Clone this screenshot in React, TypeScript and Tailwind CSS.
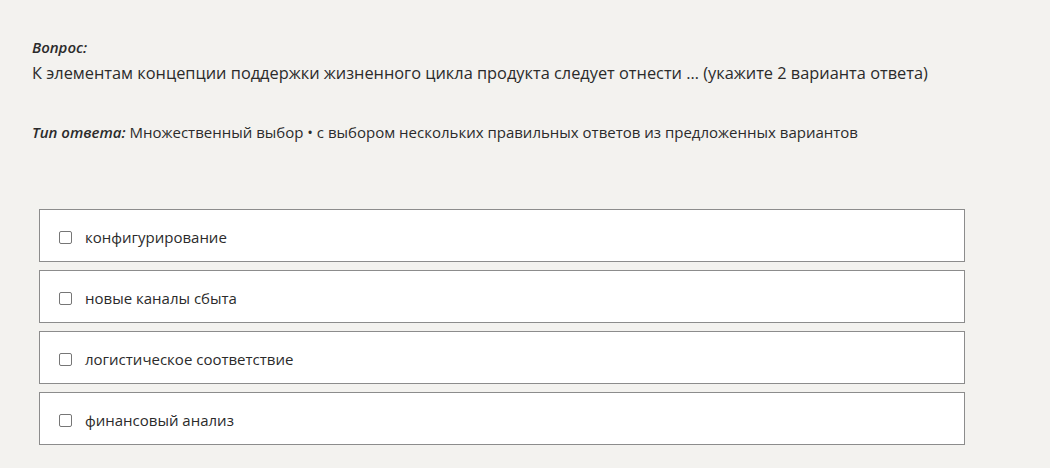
const options = [
  'конфигурирование',
  'новые каналы сбыта',
  'логистическое соответствие',
  'финансовый анализ',
]

export default function App() {
  return (
    <div
      className="min-h-[468px] w-[1050px] bg-[#f3f2ef] text-[#2b2b2b]"
      style={{ fontFamily: '"Open Sans", "Noto Sans", sans-serif' }}
    >
      <div className="px-[32px] pt-[37px]">
        <div className="text-[15px] leading-[20px] font-semibold italic">Вопрос:</div>
        <div className="mt-[6px] text-[16.35px] leading-[20px]">
          К элементам концепции поддержки жизненного цикла продукта следует отнести … (укажите 2 варианта ответа)
        </div>
        <div className="mt-[39px] text-[15px] leading-[20px]">
          <span className="font-semibold italic">Тип ответа:</span> Множественный выбор • с выбором нескольких
          правильных ответов из предложенных вариантов
        </div>
      </div>

      <div className="mt-[67px] ml-[39px] flex w-[926px] flex-col gap-[8px]">
        {options.map((option) => (
          <label
            key={option}
            className="flex h-[53px] items-center border border-[#8c8c8c] bg-white pl-[19px] pt-[3px] text-[15px]"
          >
            <span className="h-[13px] w-[13px] rounded-[2px] border border-[#767676] bg-white" />
            <span className="ml-[13px]">{option}</span>
          </label>
        ))}
      </div>
    </div>
  )
}
